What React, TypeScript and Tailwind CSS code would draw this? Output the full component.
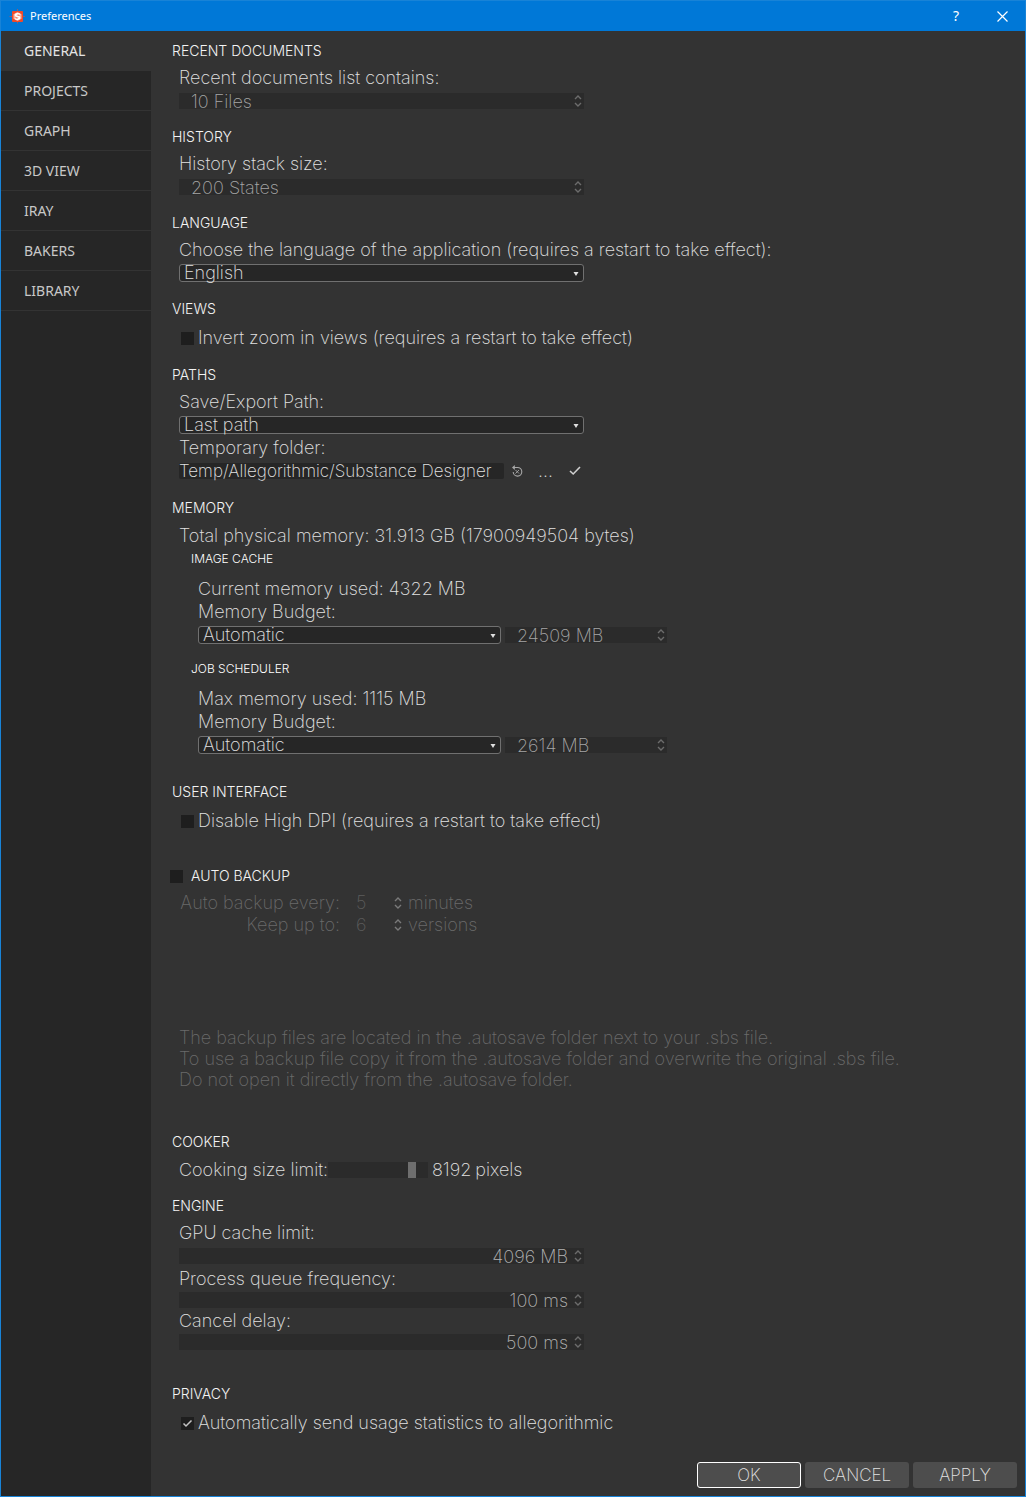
import type { ReactNode } from 'react'

const NAV = ['GENERAL', 'PROJECTS', 'GRAPH', '3D VIEW', 'IRAY', 'BAKERS', 'LIBRARY']

function Logo() {
  return (
    <svg viewBox="0 0 16 16" className="size-4" aria-hidden="true">
      <path d="M0.500 8.500h15.500M8.500 1v2M8.500 13v2.500" stroke="#8f5a72" strokeWidth="1" />
      <rect x="3" y="3" width="11" height="11" rx="1" fill="#f04a2a" />
      <path d="M8.500 4L12.500 6.300V10.700L8.500 13L4.500 10.700V6.300Z" fill="#f8b5a6" />
      <path
        d="M11 6.800C10 5.400 6.400 5.500 6.500 7.300C6.600 8.800 10.600 8 10.600 9.800C10.600 11.400 7.200 11.600 6.200 10.200"
        fill="none"
        stroke="#fff"
        strokeWidth="1.600"
      />
      <path d="M10.500 7.200L8.500 7M6.500 9.800L8.500 10.100" stroke="#f04a2a" strokeWidth="0.800" />
    </svg>
  )
}

function Heading({ children, className = '' }: { children: ReactNode; className?: string }) {
  return <h2 className={`pl-[21px] text-sm leading-5 font-light text-[#f4f4f4] ${className}`}>{children}</h2>
}

function SubHeading({ children, className = '' }: { children: ReactNode; className?: string }) {
  return <h3 className={`text-xs leading-4 font-light text-white ${className}`}>{children}</h3>
}

function Steppers({ name, disabled = false, tone }: { name: string; disabled?: boolean; tone: string }) {
  return (
    <span className={`flex w-3 shrink-0 flex-col items-center justify-between py-0.5 ${tone}`}>
      <button type="button" disabled={disabled} aria-label={`Increase ${name}`}>
        <svg viewBox="0 0 8 5" className="block h-[5px] w-2" fill="none" stroke="currentColor" strokeWidth="1.400">
          <path d="M1 4L4 1L7 4" />
        </svg>
      </button>
      <button type="button" disabled={disabled} aria-label={`Decrease ${name}`}>
        <svg viewBox="0 0 8 5" className="block h-[5px] w-2" fill="none" stroke="currentColor" strokeWidth="1.400">
          <path d="M1 1L4 4L7 1" />
        </svg>
      </button>
    </span>
  )
}

function Spin({ id, value, name, className = '', right = false }: { id: string; value: string; name: string; className?: string; right?: boolean }) {
  return (
    <div className={`flex h-4 bg-[#2b2b2b] ${className}`}>
      <input
        id={id}
        type="text"
        aria-label={name}
        defaultValue={value}
        className={`h-[18px] min-w-0 flex-1 bg-transparent outline-none ${right ? 'pr-1 text-right text-[#b4b4b4]' : 'pl-3 text-[#a6a6a6]'}`}
      />
      <Steppers name={name} tone="text-[#6c6c6c]" />
    </div>
  )
}

function Select({ id, options, className = '', name }: { id: string; options: string[]; className?: string; name: string }) {
  return (
    <div className={`relative flex h-[18px] items-center rounded-[3px] border border-[#707070] bg-[#262626] ${className}`}>
      <select
        id={id}
        aria-label={name}
        className="h-[22px] w-full shrink-0 appearance-none bg-transparent pl-1 leading-[22px] outline-none"
      >
        {options.map((o) => (
          <option key={o}>{o}</option>
        ))}
      </select>
      <svg viewBox="0 0 6 4" className="pointer-events-none absolute top-[7px] right-1 h-1 w-1.5" aria-hidden="true">
        <path d="M0.500 0H5.500L3 4Z" fill="#e0e0e0" />
      </svg>
    </div>
  )
}

function Check({ id, checked = false }: { id: string; checked?: boolean }) {
  return (
    <span className="relative block size-[13px] shrink-0">
      <input id={id} type="checkbox" defaultChecked={checked} className="peer block size-[13px] appearance-none bg-[#1e1e1e]" />
      <svg
        viewBox="0 0 13 13"
        className="pointer-events-none absolute inset-0 hidden size-[13px] peer-checked:block"
        fill="none"
        stroke="#c4c4c4"
        strokeWidth="1.500"
      >
        <path d="M2.500 6.500L5 9L10.500 3.500" />
      </svg>
    </span>
  )
}

function CheckRow({ id, label, checked, className = '' }: { id: string; label: string; checked?: boolean; className?: string }) {
  return (
    <div className={`flex items-center gap-1 pl-[30px] ${className}`}>
      <Check id={id} checked={checked} />
      <label htmlFor={id}>{label}</label>
    </div>
  )
}

function BackupField({ id, label, value, unit }: { id: string; label: string; value: string; unit: string }) {
  return (
    <div className="flex">
      <label htmlFor={id} className="w-[161px] text-right">
        {label}
      </label>
      <input id={id} type="text" disabled defaultValue={value} className="ml-4 w-9 bg-transparent text-[#5c5c5c]" />
      <span className="flex py-[3px]">
        <Steppers name={label} disabled tone="text-[#7a7a7a]" />
      </span>
      <span className="ml-1">{unit}</span>
    </div>
  )
}

function Budget({ id, value }: { id: string; value: string }) {
  return (
    <div>
      <label htmlFor={id} className="mt-px block">
        Memory Budget:
      </label>
      <div className="mt-[3px] flex items-center gap-1">
        <Select id={id} name="Memory budget mode" options={['Automatic', 'Manual']} className="w-[303px]" />
        <Spin id={`${id}-size`} name="Memory budget size" value={value} className="w-[162px]" />
      </div>
    </div>
  )
}

export default function App() {
  return (
    <div className="flex min-h-screen flex-col border border-[#1883d7] bg-[#333] font-['Inter',sans-serif] text-lg leading-[22px] font-extralight text-[#e2e2e2]">
      <header className="flex h-[30px] shrink-0 items-center bg-[#0078d7] pl-2 font-['Noto_Sans',sans-serif] text-[11px] font-normal text-white">
        <Logo />
        <h1 className="ml-[5px] flex-1">Preferences</h1>
        <button type="button" aria-label="Help" className="h-full w-[46px] text-sm">
          ?
        </button>
        <button type="button" aria-label="Close" className="flex h-full w-[46px] items-center justify-center">
          <svg viewBox="0 0 11 11" className="size-[11px]" stroke="#fff" strokeWidth="1.200">
            <path d="M0.500 0.500L10.500 10.500M10.500 0.500L0.500 10.500" />
          </svg>
        </button>
      </header>

      <div className="flex flex-1">
        <nav className="flex w-[150px] shrink-0 flex-col bg-[#262626] font-['Noto_Sans',sans-serif] text-sm font-normal text-[#c8c8c8]">
          {NAV.map((item, i) => (
            <button
              key={item}
              type="button"
              className={`h-10 border-b border-[#333] pl-[23px] text-left ${i === 0 ? 'bg-[#333] text-[#e4e4e4]' : ''}`}
            >
              {item}
            </button>
          ))}
        </nav>

        <main className="flex min-w-0 flex-1 flex-col pt-[10px]">
          <Heading>RECENT DOCUMENTS</Heading>
          <div className="mt-1.5 pl-7">
            <label htmlFor="recent" className="block">Recent documents list contains:</label>
            <Spin id="recent" name="Recent documents" value="10 Files" className="mt-1 w-[405px]" />
          </div>

          <Heading className="mt-[18px]">HISTORY</Heading>
          <div className="mt-1.5 pl-7">
            <label htmlFor="history" className="block">History stack size:</label>
            <Spin id="history" name="History stack size" value="200 States" className="mt-1 w-[405px]" />
          </div>

          <Heading className="mt-[18px]">LANGUAGE</Heading>
          <div className="mt-1.5 pl-7">
            <label htmlFor="language" className="block">Choose the language of the application (requires a restart to take effect):</label>
            <Select id="language" name="Language" options={['English']} className="mt-[3px] w-[405px]" />
          </div>

          <Heading className="mt-[17px]">VIEWS</Heading>
          <CheckRow id="invert" label="Invert zoom in views (requires a restart to take effect)" className="mt-2" />

          <Heading className="mt-4">PATHS</Heading>
          <div className="mt-1.5 pl-7">
            <label htmlFor="save-path" className="block">Save/Export Path:</label>
            <Select id="save-path" name="Save/Export Path" options={['Last path']} className="mt-[3px] w-[405px]" />
            <label htmlFor="temp" className="mt-[3px] block">Temporary folder:</label>
            <div className="mt-1 flex h-4 items-center">
              <div className="flex h-4 w-[325px] items-center rounded-[2px] bg-[#262626]">
                <input
                  id="temp"
                  type="text"
                  defaultValue="Temp/Allegorithmic/Substance Designer"
                  className="h-5 w-full bg-transparent text-[17px] outline-none"
                />
              </div>
              <button type="button" aria-label="Reset folder" className="ml-[7px]">
                <svg viewBox="0 0 12 12" className="block size-3" fill="none" stroke="#a8a8a8">
                  <path d="M3 2.500H6.500A4.300 4.300 0 1 1 2.200 7" strokeWidth="1.100" />
                  <path d="M3.800 0L1 2.500L3.800 5Z" fill="#a8a8a8" stroke="none" />
                  <path d="M4.500 5L8 8.500M8 5L4.500 8.500" strokeWidth="0.900" />
                </svg>
              </button>
              <button type="button" aria-label="Browse" className="ml-[15px]">...</button>
              <button type="button" aria-label="Apply folder" className="ml-4">
                <svg viewBox="0 0 12 10" className="block h-2.5 w-3" fill="none" stroke="#d0d0d0" strokeWidth="1.600">
                  <path d="M1 5L4.200 8L11 1" />
                </svg>
              </button>
            </div>
          </div>

          <Heading className="mt-[19px]">MEMORY</Heading>
          <p className="mt-[7px] pl-7">Total physical memory: 31.913 GB (17900949504 bytes)</p>
          <SubHeading className="mt-1 pl-10">IMAGE CACHE</SubHeading>
          <div className="mt-[11px] pl-[47px]">
            <p>Current memory used: 4322 MB</p>
            <Budget id="cache" value="24509 MB" />
          </div>
          <SubHeading className="mt-[17px] pl-10">JOB SCHEDULER</SubHeading>
          <div className="mt-[11px] pl-[47px]">
            <p>Max memory used: 1115 MB</p>
            <Budget id="jobs" value="2614 MB" />
          </div>

          <Heading className="mt-7">USER INTERFACE</Heading>
          <CheckRow id="dpi" label="Disable High DPI (requires a restart to take effect)" className="mt-2" />

          <div className="mt-[34px] flex items-center gap-2 pl-[19px] text-sm leading-5 font-light text-[#f4f4f4]">
            <Check id="backup" />
            <label htmlFor="backup">AUTO BACKUP</label>
          </div>
          <div className="mt-1.5 pl-7 text-[#6a6a6a]">
            <BackupField id="every" label="Auto backup every:" value="5" unit="minutes" />
            <BackupField id="keep" label="Keep up to:" value="6" unit="versions" />
            <p className="mt-[91px] leading-[21px]">
              The backup files are located in the .autosave folder next to your .sbs file.
              <br />
              To use a backup file copy it from the .autosave folder and overwrite the original .sbs file.
              <br />
              Do not open it directly from the .autosave folder.
            </p>
          </div>

          <Heading className="mt-[42px]">COOKER</Heading>
          <div className="mt-[7px] flex items-center pl-7">
            <label htmlFor="cooking" className="w-[149px] whitespace-nowrap">Cooking size limit:</label>
            <input
              id="cooking"
              type="range"
              min={0}
              max={92}
              defaultValue={80}
              className="h-4 w-[100px] appearance-none bg-[#2b2b2b] [&::-webkit-slider-thumb]:h-4 [&::-webkit-slider-thumb]:w-2 [&::-webkit-slider-thumb]:appearance-none [&::-webkit-slider-thumb]:bg-[#6e6e6e]"
            />
            <output htmlFor="cooking" className="ml-1">8192</output>
            <span className="ml-1">pixels</span>
          </div>

          <Heading className="mt-[15px]">ENGINE</Heading>
          <div className="mt-1.5 pl-7">
            <label htmlFor="gpu" className="block">GPU cache limit:</label>
            <Spin id="gpu" name="GPU cache limit" value="4096 MB" right className="mt-1 w-[405px]" />
            <label htmlFor="queue" className="mt-1 block">Process queue frequency:</label>
            <Spin id="queue" name="Process queue frequency" value="100 ms" right className="mt-0.5 w-[405px]" />
            <label htmlFor="cancel" className="mt-0.5 block">Cancel delay:</label>
            <Spin id="cancel" name="Cancel delay" value="500 ms" right className="mt-0.5 w-[405px]" />
          </div>

          <Heading className="mt-[34px]">PRIVACY</Heading>
          <CheckRow id="stats" label="Automatically send usage statistics to allegorithmic" checked className="mt-2" />

          <footer className="mt-auto flex justify-end gap-1 pr-2 pb-2 text-[17px]">
            <button type="button" className="h-[26px] w-[104px] rounded-[3px] border border-white bg-[#4d4d4d]">OK</button>
            <button type="button" className="h-[26px] w-[104px] rounded-[3px] bg-[#4d4d4d]">CANCEL</button>
            <button type="button" className="h-[26px] w-[104px] rounded-[3px] bg-[#4d4d4d]">APPLY</button>
          </footer>
        </main>
      </div>
    </div>
  )
}
